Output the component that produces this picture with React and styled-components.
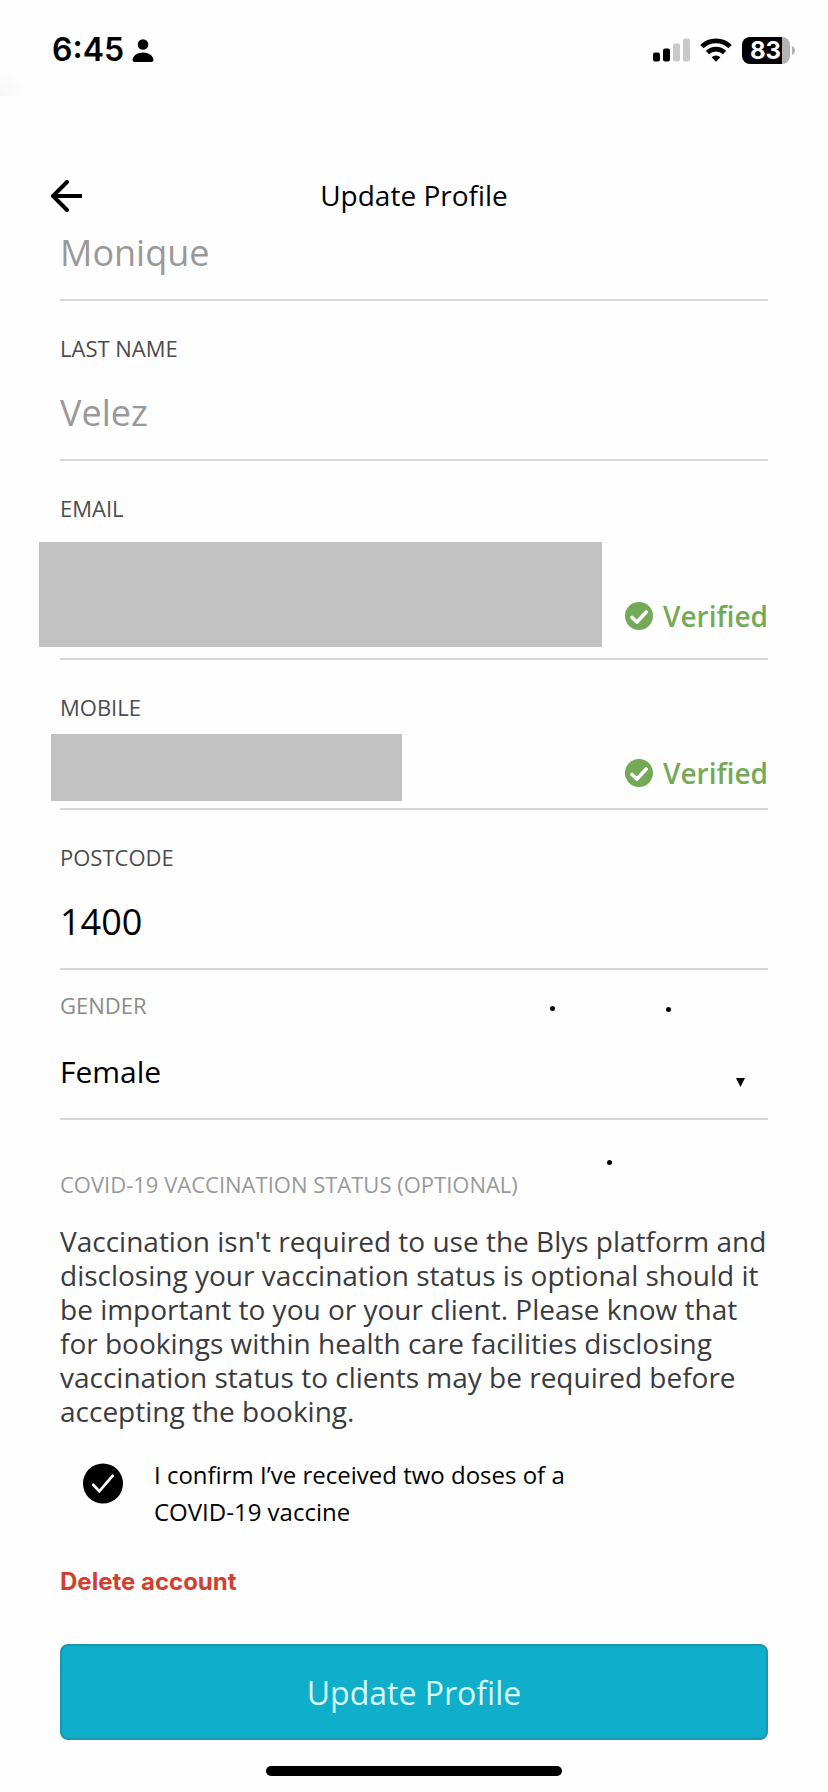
import React, {useState} from 'react'
import styled, {createGlobalStyle} from 'styled-components'

const GlobalStyle = createGlobalStyle`
  * {
    box-sizing: border-box;
  }

  body {
    margin: 0;
    background: #fefefe;
    color: #000;
    font-family: "Open Sans", "Noto Sans", sans-serif;
  }

  input, select, button {
    font-family: inherit;
    color: inherit;
  }
`

const StatusBar = styled.div`
  display: flex;
  align-items: center;
  height: 96px;
  padding: 4px 33px 0 52px;
  background: radial-gradient(circle at 0 100%, #f6f6f6, #fefefe 28px);
`

const Time = styled.span`
  margin-right: 8px;
  font-family: Inter, sans-serif;
  font-size: 32px;
  font-weight: 600;
  line-height: 40px;
`

const StatusIcons = styled.div`
  display: flex;
  align-items: center;
  gap: 10px;
  margin-left: auto;
`

const Battery = styled.div`
  display: flex;
  align-items: center;
  gap: 2px;
`

const BatteryLevel = styled.span`
  width: 48px;
  height: 27px;
  padding-left: 8px;
  border-radius: 8px;
  background: linear-gradient(to right, #000 83%, #b3b3b3 83%);
  color: #fff;
  font-family: Inter, sans-serif;
  font-size: 24px;
  font-weight: 700;
  line-height: 27px;
`

const NavBar = styled.header`
  display: grid;
  grid-template-columns: 48px 1fr 48px;
  align-items: center;
  padding: 80px 42px 0;
`

const BackButton = styled.button`
  display: flex;
  padding: 2px 8px 0;
  border: none;
  background: none;
  cursor: pointer;
`

const Title = styled.h1`
  margin: 0;
  font-size: 28px;
  font-weight: 400;
  line-height: 38px;
  text-align: center;
`

const Form = styled.form`
  padding: 0 60px;
`

const Field = styled.div`
  position: relative;
  display: flex;
  flex-direction: column;
  padding-top: ${props => props.$top || 32}px;
  border-bottom: 2px solid #d6d6d6;
`

const Label = styled.label`
  color: ${props => props.$muted ? '#8a8a8a' : '#4c4c4c'};
  font-size: 22px;
  line-height: 30px;
`

const TextInput = styled.input`
  width: 100%;
  height: 50px;
  margin: ${props => props.$first ? 1 : 25}px 0 21px;
  padding: 0;
  border: none;
  outline: none;
  background: none;
  font-size: 36px;
  line-height: 50px;

  &:disabled {
    color: #999;
  }
`

const VerifiedRow = styled.div`
  display: flex;
  align-items: flex-end;
  justify-content: space-between;
`

const HiddenInput = styled.input`
  flex: 0 1 ${props => props.$width}px;
  min-width: 0;
  height: ${props => props.$height}px;
  margin: ${props => props.$margin};
  padding: 0;
  border: none;
  outline: none;
  background: #c2c2c2;
`

const Verified = styled.span`
  display: flex;
  align-items: center;
  gap: 10px;
  margin-bottom: ${props => props.$bottom}px;
  color: #74a957;
  font-size: 28px;
  font-weight: 600;
  line-height: 38px;
`

const Select = styled.select`
  width: 100%;
  height: 42px;
  margin: 31px 0 25px;
  padding: 0;
  border: none;
  outline: none;
  appearance: none;
  background: none;
  font-size: 30px;
  line-height: 42px;
`

const Caret = styled.svg`
  position: absolute;
  right: 23px;
  bottom: 31px;
  pointer-events: none;
`

const Dot = styled.i`
  position: absolute;
  right: ${props => props.$right}px;
  top: ${props => props.$top}px;
  width: 5px;
  height: 5px;
  border-radius: 50%;
  background: #000;
`

const Section = styled.section`
  position: relative;
  padding-top: 49px;
`

const SectionTitle = styled.h2`
  margin: 0;
  color: #999;
  font-size: 22px;
  font-weight: 400;
  line-height: 30px;
`

const Text = styled.p`
  margin: 25px 0 28px;
  color: #3b3b3d;
  font-size: 28px;
  line-height: 34px;
`

const Confirm = styled.label`
  display: grid;
  grid-template-columns: 40px minmax(0, 430px);
  gap: 31px;
  align-items: start;
  padding-left: 23px;
  font-size: 24px;
  line-height: 37px;
`

const CheckCircle = styled.span`
  position: relative;
  display: flex;
  margin-top: 7px;

  input {
    position: absolute;
    inset: 0;
    margin: 0;
    opacity: 0;
  }

  input:not(:checked) + svg path {
    display: none;
  }
`

const DeleteButton = styled.button`
  display: block;
  margin: 37px 0 47px;
  padding: 0;
  border: none;
  background: none;
  cursor: pointer;

  && {
    color: #cf4030;
    font-family: Inter, sans-serif;
  }
  font-size: 24px;
  font-weight: 700;
  line-height: 30px;
`

const SubmitButton = styled.button`
  display: block;
  width: 100%;
  height: 96px;
  padding: 2px 0 0;
  border: 2px solid #1c95ae;
  border-radius: 8px;
  background: #0faecb;
  cursor: pointer;

  && {
    color: #d8fbff;
  }
  font-size: 32px;
  line-height: 44px;
`

const HomeIndicator = styled.div`
  width: 296px;
  height: 10px;
  margin: 26px auto 16px;
  border-radius: 5px;
  background: #000;
`

const PersonIcon = () => (
  <svg width="22" height="23" viewBox="0 0 22 23" aria-hidden="true">
    <circle cx="11" cy="5.5" r="5.3"/>
    <path d="M3 23C1 23 .4 22 .6 20.500C1.200 16.500 5.500 13.600 11 13.600s9.800 2.900 10.400 6.900C21.600 22 21 23 19 23z"/>
  </svg>
)

const SignalIcon = () => (
  <svg width="37" height="24" viewBox="0 0 37 24" aria-hidden="true">
    <rect x="0" y="14.500" width="7" height="9" rx="2"/>
    <rect x="10" y="10.500" width="7" height="13" rx="2"/>
    <rect x="20" y="5.500" width="7" height="18" rx="2" fill="#c9c9c9"/>
    <rect x="30" y=".5" width="7" height="23" rx="2" fill="#c9c9c9"/>
  </svg>
)

const WifiIcon = () => (
  <svg width="32" height="24" viewBox="0 0 32 24" aria-hidden="true">
    <g fill="none" stroke="#000" strokeWidth="4.600">
      <path d="M1.800 8.700a20.300 20.300 0 0 1 28.400 0"/>
      <path d="M7.500 14.600a12.200 12.200 0 0 1 17 0"/>
    </g>
    <path d="M16 23.800l-4.400-4.500a6.300 6.300 0 0 1 8.800 0z"/>
  </svg>
)

const ArrowIcon = () => (
  <svg width="32" height="32" viewBox="0 0 32 32" fill="none" stroke="#000" strokeWidth="4" aria-hidden="true">
    <path d="M3 16H32"/>
    <path d="M17 2L3 16l14 14" strokeLinecap="round" strokeLinejoin="round"/>
  </svg>
)

const VerifiedIcon = () => (
  <svg width="28" height="28" viewBox="0 0 28 28" aria-hidden="true">
    <circle cx="14" cy="14" r="14" fill="#74a957"/>
    <path d="M7 15.500l5 4.500 9.200-10" fill="none" stroke="#fff" strokeWidth="3.600" strokeLinecap="round" strokeLinejoin="round"/>
  </svg>
)

const CheckIcon = () => (
  <svg width="41" height="41" viewBox="0 0 41 41" aria-hidden="true">
    <circle cx="20.500" cy="20.500" r="20.500"/>
    <path d="M10.500 21.800l6.200 6.700L30.500 12.500" fill="none" stroke="#fff" strokeWidth="2.800" strokeLinecap="round"/>
  </svg>
)

const VerifiedBadge = ({bottom}) => (
  <Verified $bottom={bottom}><VerifiedIcon/>Verified</Verified>
)

const App = () => {
  const [postcode, setPostcode] = useState('1400')
  const [gender, setGender] = useState('Female')
  const [confirmed, setConfirmed] = useState(true)

  return (
    <>
      <GlobalStyle/>
      <StatusBar>
        <Time>6:45</Time>
        <PersonIcon/>
        <StatusIcons>
          <SignalIcon/>
          <WifiIcon/>
          <Battery>
            <BatteryLevel>83</BatteryLevel>
            <svg width="3" height="9" viewBox="0 0 3 9" aria-hidden="true">
              <path d="M0 0c2 .8 3 2.500 3 4.500S2 8.200 0 9z" fill="#b3b3b3"/>
            </svg>
          </Battery>
        </StatusIcons>
      </StatusBar>
      <NavBar>
        <BackButton type="button" aria-label="Back"><ArrowIcon/></BackButton>
        <Title>Update Profile</Title>
      </NavBar>
      <Form onSubmit={(e) => e.preventDefault()}>
        <Field $top={13}>
          <TextInput $first aria-label="First name" value="Monique" disabled/>
        </Field>
        <Field>
          <Label htmlFor="lastName">LAST NAME</Label>
          <TextInput id="lastName" value="Velez" disabled/>
        </Field>
        <Field>
          <Label htmlFor="email">EMAIL</Label>
          <VerifiedRow>
            <HiddenInput id="email" readOnly $width={563} $height={105} $margin="19px 0 11px -21px"/>
            <VerifiedBadge bottom={23}/>
          </VerifiedRow>
        </Field>
        <Field>
          <Label htmlFor="mobile">MOBILE</Label>
          <VerifiedRow>
            <HiddenInput id="mobile" readOnly $width={351} $height={67} $margin="12px 0 7px -9px"/>
            <VerifiedBadge bottom={16}/>
          </VerifiedRow>
        </Field>
        <Field>
          <Label htmlFor="postcode">POSTCODE</Label>
          <TextInput id="postcode" value={postcode} onChange={(e) => setPostcode(e.target.value)}/>
        </Field>
        <Field $top={20}>
          <Label htmlFor="gender" $muted>GENDER</Label>
          <Select id="gender" value={gender} onChange={(e) => setGender(e.target.value)}>
            <option>Female</option>
            <option>Male</option>
          </Select>
          <Caret width="9" height="9" viewBox="0 0 9 9" aria-hidden="true"><path d="M0 0h9L4.500 9z"/></Caret>
          <Dot $right={213} $top={36}/>
          <Dot $right={97} $top={37}/>
        </Field>
        <Section>
          <SectionTitle>COVID-19 VACCINATION STATUS (OPTIONAL)</SectionTitle>
          <Dot $right={156} $top={40}/>
          <Text>
            Vaccination isn't required to use the Blys platform and disclosing your vaccination status is
            optional should it be important to you or your client. Please know that for bookings within health
            care facilities disclosing vaccination status to clients may be required before accepting the booking.
          </Text>
          <Confirm>
            <CheckCircle>
              <input type="checkbox" checked={confirmed} onChange={(e) => setConfirmed(e.target.checked)}/>
              <CheckIcon/>
            </CheckCircle>
            <span>I confirm I’ve received two doses of a COVID-19 vaccine</span>
          </Confirm>
        </Section>
        <DeleteButton type="button">Delete account</DeleteButton>
        <SubmitButton type="submit">Update Profile</SubmitButton>
      </Form>
      <HomeIndicator/>
    </>
  )
}

export default App
